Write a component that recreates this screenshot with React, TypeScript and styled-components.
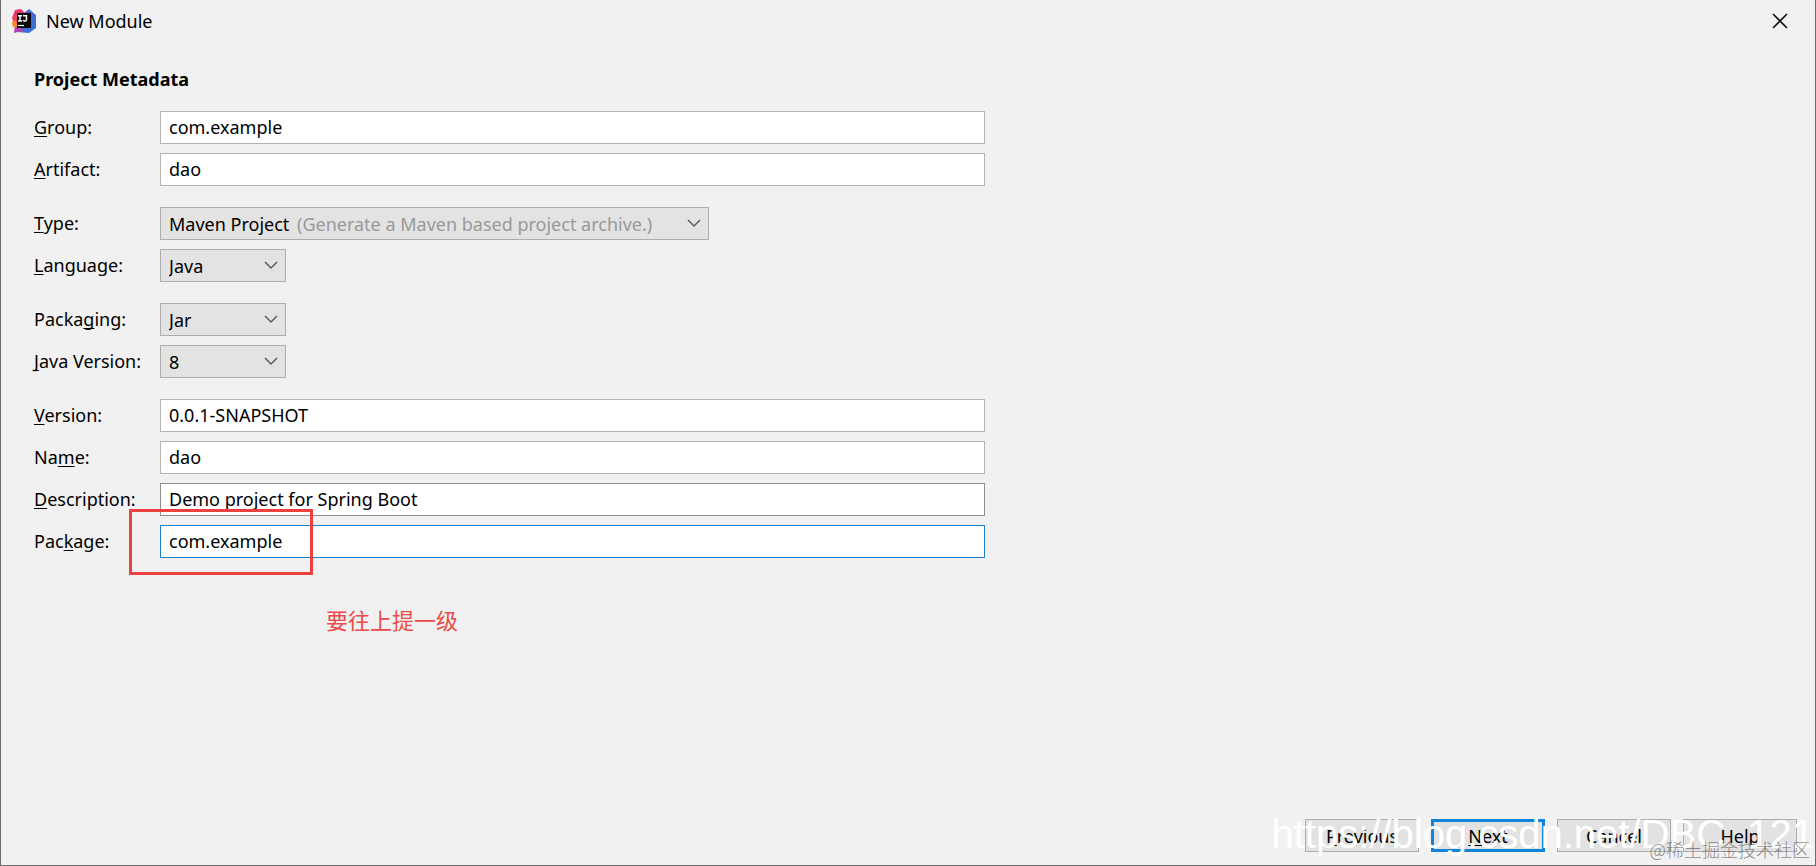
import React, { useState } from "react";
import styled, { createGlobalStyle } from "styled-components";

const GlobalStyle = createGlobalStyle`
  * { box-sizing: border-box; }
  body {
    margin: 0;
    background: #f1f1f1;
    color: #000;
    font-family: "Noto Sans", "Noto Sans CJK SC", sans-serif;
    font-size: 18px;
    line-height: 24px;
  }
`;

const Dialog = styled.div`
  position: relative;
  display: flex;
  flex-direction: column;
  min-height: 100vh;
  border: solid #6b6b6b;
  border-width: 0 1px 1px 1px;
  overflow: hidden;
`;

const TitleBar = styled.header`
  display: flex;
  align-items: center;
  height: 42px;
  padding: 0 23px 0 10px;
  gap: 10px;
`;

const Title = styled.h1`
  flex: 1;
  margin: 0;
  font-size: 18px;
  font-weight: 400;
`;

const CloseButton = styled.button`
  display: flex;
  width: 24px;
  height: 24px;
  padding: 0;
  align-items: center;
  justify-content: center;
  border: 0;
  background: none;
`;

const Form = styled.form`
  flex: 1;
  display: flex;
  flex-direction: column;
  padding: 25px 33px 0;
`;

const Heading = styled.h2`
  margin: 0 0 20px;
  font-size: 18px;
  font-weight: 700;
`;

const FieldGroups = styled.div`
  position: relative;
  display: flex;
  flex-direction: column;
  gap: 21px;
`;

const FieldGroup = styled.div`
  display: flex;
  flex-direction: column;
  gap: 9px;
`;

const Field = styled.div`
  display: flex;
  align-items: center;
  height: 33px;
`;

const Label = styled.label`
  width: 126px;
  flex: none;
  padding-bottom: 2px;
  white-space: nowrap;
`;

const Mnemonic = styled.span`
  text-decoration: underline;
  text-decoration-thickness: 1px;
  text-underline-offset: 2px;
  text-decoration-skip-ink: none;
`;

const TextBox = styled.input<{ $edge?: string }>`
  width: 48vw;
  max-width: 825px;
  height: 33px;
  padding: 0 8px 2px;
  border: 1px solid ${(p) => p.$edge ?? "#b4b4b4"};
  border-radius: 0;
  background: #fff;
  color: inherit;
  font: inherit;
  outline: none;
`;

const SelectBox = styled.div<{ $wide?: boolean }>`
  position: relative;
  width: ${(p) => (p.$wide ? "549px" : "126px")};
  height: 33px;
`;

const Select = styled.select`
  appearance: none;
  width: 100%;
  height: 100%;
  padding: 0 8px;
  border: 1px solid #adadad;
  border-radius: 0;
  background: #e3e3e3;
  color: inherit;
  font: inherit;
`;

const Hint = styled.span`
  position: absolute;
  left: 137px;
  top: 5px;
  color: #999;
  white-space: nowrap;
  pointer-events: none;
`;

const Chevron = styled.svg`
  position: absolute;
  right: 8px;
  top: 12px;
  pointer-events: none;
`;

const Highlight = styled.div`
  position: absolute;
  left: 95px;
  bottom: -17px;
  width: 184px;
  height: 66px;
  border: 3px solid #ec413f;
  pointer-events: none;
`;

const Note = styled.p`
  position: absolute;
  left: 292px;
  bottom: -78px;
  margin: 0;
  color: #ec4a48;
  font-size: 22px;
  line-height: 32px;
`;

const Footer = styled.footer`
  display: flex;
  justify-content: flex-end;
  gap: 12px;
  padding: 0 18px 13px;
`;

const Button = styled.button<{ $primary?: boolean }>`
  width: 114px;
  height: 33px;
  padding: 0;
  border: ${(p) => (p.$primary ? "3px solid #0f84d8" : "1px solid #adadad")};
  background: #e2e2e2;
  color: inherit;
  font: inherit;
  line-height: 24px;
`;

const BlogMark = styled.div`
  position: absolute;
  right: 1px;
  bottom: 8px;
  color: #fff;
  font: 40px/46px "Liberation Sans", sans-serif;
  white-space: nowrap;
  pointer-events: none;
`;

const SiteMark = styled.div`
  position: absolute;
  right: 5px;
  bottom: 4px;
  color: rgba(110, 110, 110, 0.8);
  font: 18px/24px "Noto Sans CJK SC", sans-serif;
  font-weight: 300;
  white-space: nowrap;
  pointer-events: none;
`;

type Item = {
  id: string;
  label: [string, string, string];
  value: string;
  kind: "text" | "select";
  hint?: string;
  edge?: string;
};

const groups: Item[][] = [
  [
    { id: "group", label: ["", "G", "roup:"], value: "com.example", kind: "text" },
    { id: "artifact", label: ["", "A", "rtifact:"], value: "dao", kind: "text" },
  ],
  [
    {
      id: "type",
      label: ["", "T", "ype:"],
      value: "Maven Project",
      kind: "select",
      hint: "(Generate a Maven based project archive.)",
    },
    { id: "language", label: ["", "L", "anguage:"], value: "Java", kind: "select" },
  ],
  [
    { id: "packaging", label: ["Packa", "g", "ing:"], value: "Jar", kind: "select" },
    { id: "java-version", label: ["", "J", "ava Version:"], value: "8", kind: "select" },
  ],
  [
    { id: "version", label: ["", "V", "ersion:"], value: "0.0.1-SNAPSHOT", kind: "text" },
    { id: "name", label: ["Na", "m", "e:"], value: "dao", kind: "text" },
    {
      id: "description",
      label: ["", "D", "escription:"],
      value: "Demo project for Spring Boot",
      kind: "text",
      edge: "#8f8f8f",
    },
    { id: "package", label: ["Pac", "k", "age:"], value: "com.example", kind: "text", edge: "#1a83c9" },
  ],
];

function FieldRow({ item }: { item: Item }) {
  const [value, setValue] = useState(item.value);
  const [before, key, after] = item.label;
  return (
    <Field>
      <Label htmlFor={item.id}>
        {before}
        <Mnemonic>{key}</Mnemonic>
        {after}
      </Label>
      {item.kind === "text" ? (
        <TextBox
          id={item.id}
          $edge={item.edge}
          value={value}
          spellCheck={false}
          onChange={(e) => setValue(e.target.value)}
        />
      ) : (
        <SelectBox $wide={!!item.hint}>
          <Select id={item.id} value={value} onChange={(e) => setValue(e.target.value)}>
            <option>{item.value}</option>
          </Select>
          {item.hint && <Hint>{item.hint}</Hint>}
          <Chevron width="14" height="9" viewBox="0 0 14 9" fill="none" stroke="#5c5c5c" strokeWidth="1.5">
            <path d="M1 1l6 6 6-6" />
          </Chevron>
        </SelectBox>
      )}
    </Field>
  );
}

function IdeaLogo() {
  return (
    <svg width="25" height="25" viewBox="0 0 25 25" aria-hidden="true">
      <defs>
        <linearGradient id="warm" x1="0.6" y1="0" x2="0.4" y2="1">
          <stop offset="0" stopColor="#f2306a" />
          <stop offset="0.45" stopColor="#e8415f" />
          <stop offset="1" stopColor="#b63fae" />
        </linearGradient>
        <linearGradient id="cool" x1="0" y1="0" x2="1" y2="0.6">
          <stop offset="0" stopColor="#6a54c0" />
          <stop offset="1" stopColor="#3673dc" />
        </linearGradient>
      </defs>
      <path d="M1 13l4-3 3 9-6-1z" fill="#f78a2d" />
      <path d="M4 1l6-1 4 4-2 12-9 8 1-7-3-8z" fill="url(#warm)" />
      <path d="M1 13l4-2 2 8-5-1z" fill="#f78a2d" />
      <path d="M13 4l5-4 7 6v13l-7 5-12-1 4-6z" fill="url(#cool)" />
      <path d="M3 24l2-6 9 3z" fill="#b63fae" />
      <path d="M6 4h14v15H6z" fill="#0b0709" />
      <path d="M7 6.700h4M9 6.700v5.300M7 12h4M12 6.700h3.500v3.800c0 1.600-2.200 2-3.600.8" fill="none" stroke="#fff" strokeWidth="1.500" />
      <path d="M7 16.500h6" stroke="#fff" strokeWidth="1.200" />
    </svg>
  );
}

export default function App() {
  return (
    <>
      <GlobalStyle />
      <Dialog role="dialog" aria-label="New Module">
        <TitleBar>
          <IdeaLogo />
          <Title>New Module</Title>
          <CloseButton type="button" aria-label="Close">
            <svg width="16" height="16" viewBox="0 0 16 16" stroke="#111" strokeWidth="1.6">
              <path d="M1 1l14 14M15 1L1 15" />
            </svg>
          </CloseButton>
        </TitleBar>
        <Form onSubmit={(e) => e.preventDefault()}>
          <Heading>Project Metadata</Heading>
          <FieldGroups>
            {groups.map((items) => (
              <FieldGroup key={items[0].id}>
                {items.map((item) => (
                  <FieldRow key={item.id} item={item} />
                ))}
              </FieldGroup>
            ))}
            <Highlight />
            <Note>要往上提一级</Note>
          </FieldGroups>
        </Form>
        <Footer>
          <Button type="button"><Mnemonic>P</Mnemonic>revious</Button>
          <Button type="button" $primary><Mnemonic>N</Mnemonic>ext</Button>
          <Button type="button">Cancel</Button>
          <Button type="button">Help</Button>
        </Footer>
        <BlogMark>https://blog.csdn.net/DBC_121</BlogMark>
        <SiteMark>@稀土掘金技术社区</SiteMark>
      </Dialog>
    </>
  );
}
